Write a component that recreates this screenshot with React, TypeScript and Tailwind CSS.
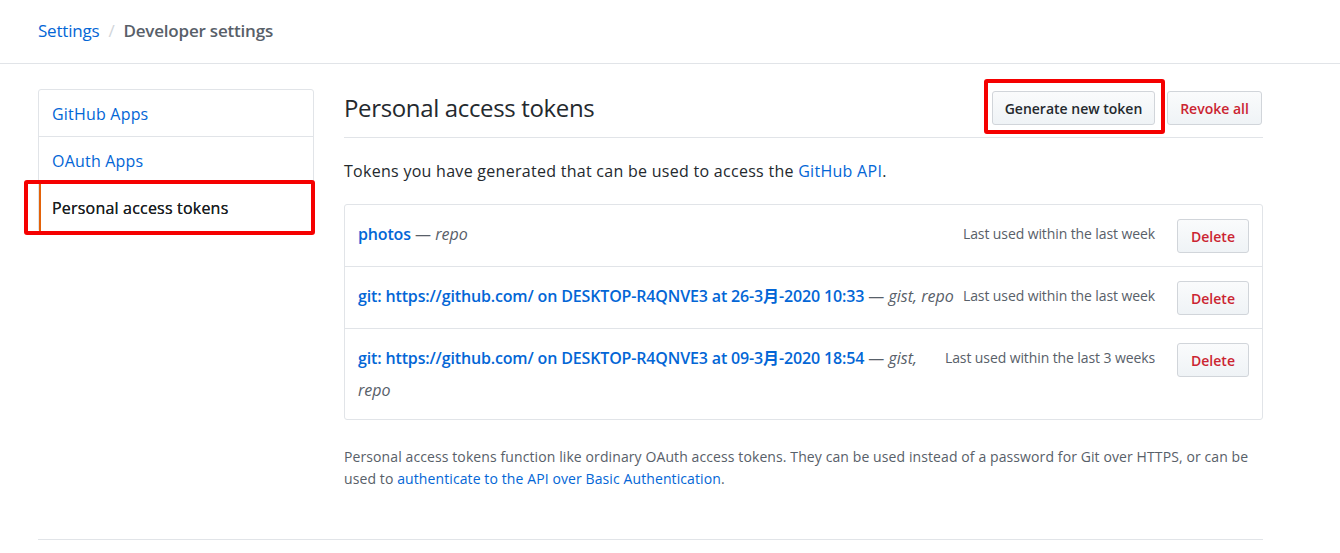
import React from 'react';

const tokens = [
  { name: 'photos', scopes: 'repo', lastUsed: 'Last used within the last week' },
  {
    name: 'git: https://github.com/ on DESKTOP-R4QNVE3 at 26-3月-2020 10:33',
    scopes: 'gist, repo',
    lastUsed: 'Last used within the last week',
  },
  {
    name: 'git: https://github.com/ on DESKTOP-R4QNVE3 at 09-3月-2020 18:54',
    scopes: 'gist, repo',
    lastUsed: 'Last used within the last 3 weeks',
  },
];

const btn =
  'h-[34px] rounded-[3px] border border-[#d1d5da] bg-gradient-to-b from-[#fafbfc] to-[#eff3f6] text-[14px] font-semibold';

function Sidebar() {
  return (
    <nav className="w-[276px] shrink-0 self-start rounded-[3px] border border-[#e1e4e8] text-[16px] tracking-[0.2px]">
      <a className="flex h-[47px] items-center border-b border-[#e1e4e8] pl-[13px] pt-[2px] text-[#0366d6]">GitHub Apps</a>
      <a className="flex h-[47px] items-center border-b border-[#e1e4e8] pl-[13px] pt-[2px] text-[#0366d6]">OAuth Apps</a>
      <a className="relative flex h-[47px] items-center border-l-2 border-[#e36209] pl-[11px] text-[#1b1f23] [text-shadow:0_0_0.3px_#1b1f23]">
        Personal access tokens
        <span className="absolute -left-[17px] -top-[4px] h-[55px] w-[291px] rounded-[3px] border-4 border-[#f50000]" />
      </a>
    </nav>
  );
}

function TokenRow({ name, scopes, lastUsed }: { name: string; scopes: string; lastUsed: string }) {
  return (
    <li className="flex items-start gap-[9px] border-t border-[#e1e4e8] pb-[13px] pl-[13px] pr-[13px] pt-[14px] first:border-t-0">
      <div className="-mt-[1px] min-w-0 flex-1 text-[16px] leading-[32px]">
        <a className="font-semibold tracking-[-0.15px] text-[#0366d6]">{name}</a>
        <span className="text-[#586069]"> — <em>{scopes}</em></span>
      </div>
      <span className="-mt-[1px] shrink-0 text-[14px] leading-[32px] tracking-[-0.1px] text-[#586069]">{lastUsed}</span>
      <button className={`${btn} ml-[13px] w-[72px] shrink-0 text-[#cb2431]`}>Delete</button>
    </li>
  );
}

export default function App() {
  return (
    <div className="min-h-[553px] bg-white text-[#24292e]" style={{ fontFamily: '"Open Sans", "Noto Sans CJK SC", sans-serif' }}>
      <header className="flex h-[64px] items-center border-b border-[#e1e4e8] pb-[2px] pl-[38px] text-[17px] tracking-[-0.2px]">
        <a className="text-[#0366d6]">Settings</a>
        <span className="mx-[9px] text-[#d1d5da]">/</span>
        <span className="font-semibold text-[#586069]">Developer settings</span>
      </header>

      <div className="ml-[38px] mt-[25px] flex w-[1225px] gap-[30px]">
        <Sidebar />

        <main className="flex-1">
          <div className="flex items-center justify-between border-b border-[#e1e4e8] pb-[12px] pt-[2px]">
            <h2 className="text-[24px] font-normal leading-[34px] tracking-[-0.35px]">Personal access tokens</h2>
            <div className="flex gap-[12px] pr-[1px]">
              <button className={`${btn} relative w-[163px] text-[#24292e]`}>
                Generate new token
                <span className="absolute -left-[9px] -top-[13px] h-[55px] w-[181px] rounded-[3px] border-4 border-[#f50000]" />
              </button>
              <button className={`${btn} w-[95px] text-[#cb2431]`}>Revoke all</button>
            </div>
          </div>

          <p className="mt-[21px] text-[16px] leading-[24px] tracking-[0.28px]">
            Tokens you have generated that can be used to access the <a className="text-[#0366d6]">GitHub API</a>.
          </p>

          <ul className="mt-[21px] rounded-[3px] border border-[#e1e4e8]">
            {tokens.map((t) => (
              <TokenRow key={t.name} {...t} />
            ))}
          </ul>

          <p className="mt-[26px] text-[14px] leading-[22px] tracking-[0.1px] text-[#586069]">
            Personal access tokens function like ordinary OAuth access tokens. They can be used instead of a password for Git over HTTPS, or can be used to{' '}
            <a className="text-[#0366d6]">authenticate to the API over Basic Authentication</a>.
          </p>

          <div className="mt-[49px] -ml-[306px] border-t border-[#e1e4e8]" />
        </main>
      </div>
    </div>
  );
}
